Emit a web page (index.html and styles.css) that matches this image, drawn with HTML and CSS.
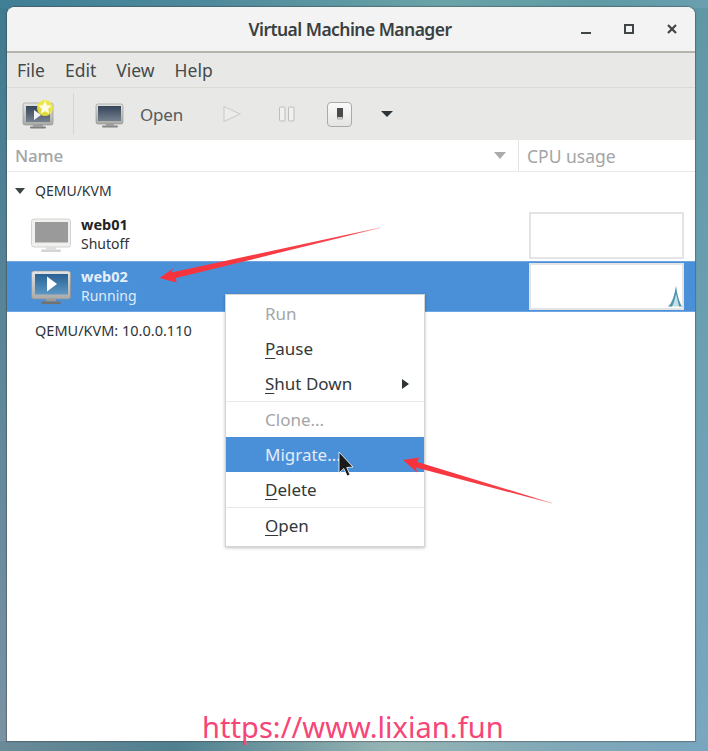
FILE: index.html
```html
<!DOCTYPE html>
<html lang="en">
<head>
<meta charset="utf-8">
<title>Virtual Machine Manager</title>
<link rel="stylesheet" href="styles.css">
</head>
<body>
<svg class="defs" width="0" height="0" aria-hidden="true">
  <defs>
    <linearGradient id="bezel" x1="0" y1="0" x2="0" y2="1"><stop offset="0" stop-color="#e4e4e2"/><stop offset="1" stop-color="#a9a9a6"/></linearGradient>
    <linearGradient id="screen" x1="0" y1="0" x2="0" y2="1"><stop offset="0" stop-color="#35445a"/><stop offset="1" stop-color="#76818f"/></linearGradient>
    <linearGradient id="blue" x1="0" y1="0" x2="0" y2="1"><stop offset="0" stop-color="#2a6293"/><stop offset="1" stop-color="#5b97c5"/></linearGradient>
    <linearGradient id="a1" gradientUnits="userSpaceOnUse" x1="160" y1="278" x2="380" y2="228"><stop offset="0" stop-color="#f6323c"/><stop offset=".85" stop-color="#f8424a"/><stop offset="1" stop-color="#ff9a9a"/></linearGradient>
    <linearGradient id="a2" gradientUnits="userSpaceOnUse" x1="403" y1="460" x2="552" y2="503"><stop offset="0" stop-color="#f6323c"/><stop offset=".85" stop-color="#f8424a"/><stop offset="1" stop-color="#ff9a9a"/></linearGradient>
  </defs>
</svg>
<div class="window">
  <header class="titlebar">
    <div class="title">Virtual Machine Manager</div>
    <div class="wm">
      <svg width="12" height="12" viewBox="0 0 12 12"><rect x="1" y="9" width="10" height="2" fill="#3f4446"/></svg>
      <svg width="12" height="12" viewBox="0 0 12 12"><rect x="2" y="2" width="8" height="8" fill="none" stroke="#3f4446" stroke-width="2"/></svg>
      <svg width="12" height="12" viewBox="0 0 12 12"><path d="M2 2l8 8M10 2l-8 8" stroke="#3f4446" stroke-width="2.2" fill="none"/></svg>
    </div>
  </header>
  <nav class="menubar"><span>File</span><span>Edit</span><span>View</span><span>Help</span></nav>
  <div class="toolbar">
    <svg class="new-icon" width="34" height="32" viewBox="0 0 34 32">
      <rect x="2" y="5" width="30" height="22" rx="2" fill="url(#bezel)" stroke="#8f8f8d" stroke-width=".6"/>
      <rect x="5" y="8" width="24" height="16" fill="url(#screen)"/>
      <path d="M13 12l7 5-7 5z" fill="#f2f2f2"/>
      <rect x="12" y="27" width="10" height="1.500" fill="#999"/><rect x="9" y="28.500" width="16" height="2" rx="1" fill="#808080"/>
      <circle cx="24" cy="10" r="8" fill="#efe93a" opacity=".9"/>
      <path d="M24 3l2 4.300 4.700.5-3.500 3.200 1 4.600-4.200-2.400-4.200 2.400 1-4.600-3.500-3.200 4.700-.5z" fill="#fdfbe2"/>
    </svg>
    <div class="tb-sep"></div>
    <svg class="open-icon" width="30" height="28" viewBox="0 0 30 28">
      <rect x="1" y="4" width="27" height="20" rx="2" fill="url(#bezel)" stroke="#8f8f8d" stroke-width=".6"/>
      <rect x="3" y="6" width="23" height="15" fill="url(#screen)"/>
      <rect x="11" y="24" width="8" height="1.500" fill="#999"/><rect x="7" y="25.500" width="16" height="2" rx="1" fill="#858585"/>
    </svg>
    <span class="tb-label">Open</span>
    <svg class="tb-play" width="20" height="20" viewBox="0 0 20 20"><path d="M2 2.500L18 10 2 17.500z" fill="#ececea" stroke="#cfd0ce" stroke-width="1.200"/></svg>
    <svg class="tb-pause" width="18" height="16" viewBox="0 0 18 16"><rect x="1.500" y="1" width="5.500" height="14" rx="1" fill="#f0f0ee" stroke="#bdbdbb"/><rect x="10.500" y="1" width="5.500" height="14" rx="1" fill="#f0f0ee" stroke="#bdbdbb"/></svg>
    <div class="tb-stop"><svg width="8" height="14" viewBox="0 0 8 14"><path d="M1 1h6v8l-1 4H2L1 9z" fill="#4a4a4a"/><rect x="2" y="10" width="4" height="3" fill="#c8c8c8"/></svg></div>
    <span class="tb-caret"></span>
  </div>
  <div class="colhead">
    <div class="col-name"><span>Name</span><i class="sort"></i></div>
    <div class="col-cpu">CPU usage</div>
  </div>
  <main class="list">
    <div class="group"><i class="expander"></i><span>QEMU/KVM</span></div>
    <div class="row">
      <svg class="vm-icon" width="42" height="40" viewBox="0 0 42 40">
        <rect x="1.500" y="4" width="39" height="28" rx="2.500" fill="#f0f0ee" stroke="#d2d2d0"/>
        <rect x="5" y="7" width="33" height="20.500" fill="#9a9a9a"/>
        <rect x="16" y="32" width="10" height="2.500" fill="#dededc"/><rect x="11" y="34.500" width="20" height="2.500" rx="1.200" fill="#d4d4d2"/>
      </svg>
      <div class="vm-text"><b>web01</b><span>Shutoff</span></div>
      <div class="graph"></div>
    </div>
    <div class="row selected">
      <svg class="vm-icon" width="42" height="40" viewBox="0 0 42 40">
        <rect x="1.500" y="4" width="39" height="28" rx="2.500" fill="url(#bezel)" stroke="#8f8f8d" stroke-width=".6"/>
        <rect x="5" y="7" width="33" height="20.500" fill="url(#blue)"/>
        <path d="M17 9.500l10 7.500-10 7.500z" fill="#fff"/>
        <rect x="16" y="32" width="10" height="2.500" fill="#9a9a98"/><rect x="11" y="34.500" width="20" height="2.500" rx="1.200" fill="#727270"/>
      </svg>
      <div class="vm-text"><b>web02</b><span>Running</span></div>
      <div class="graph">
        <svg class="spark" width="17" height="23" viewBox="0 0 17 23">
          <path d="M3 21.500C7 19 9.500 10 11 1 12 9 14 17 17 21.500z" fill="#c4dfe6"/>
          <path d="M3 21.500C7 19 9.500 10 11 1 12 9 14 17 17 21.500H14C13 17 12 12 11 9 10 13 9 18 7 21.500z" fill="#4e95ad"/>
        </svg>
      </div>
    </div>
    <div class="group connection">QEMU/KVM: 10.0.0.110</div>
  </main>

  <div class="ctx">
    <div class="mi off">Run</div>
    <div class="mi"><u>P</u>ause</div>
    <div class="mi">
      <span><u>S</u>hut Down</span>
      <i class="sub"></i>
    </div>
    <div class="msep"></div>
    <div class="mi off">Clone...</div>
    <div class="mi hot">Migrate...</div>
    <div class="mi"><u>D</u>elete</div>
    <div class="msep"></div>
    <div class="mi"><u>O</u>pen</div>
  </div>
</div>

<svg class="overlay" width="708" height="751" viewBox="0 0 708 751" aria-hidden="true">
  <path d="M159.500 278L173 268.500 171.500 272.500 380 227.500 380 228 176 278 176.500 282.500z" fill="url(#a1)"/>
  <path d="M403 460L419 457.500 417.500 462 552 503 552 503.500 416 467.500 417 472.500z" fill="url(#a2)"/>
  <path d="M339 452v21l4.800-4.500 3.400 7.500 2.800-1.200-3.200-7.300 6.200-.5z" fill="#1a1a1a" stroke="#fff" stroke-width=".8"/>
</svg>
<div class="watermark">https://www.lixian.fun</div>
</body>
</html>
```
FILE: styles.css
```css
* { box-sizing: border-box; }
html, body { margin: 0; height: 100%; }
body {
  width: 708px;
  height: 751px;
  overflow: hidden;
  padding: 7px 13px 10px 7px;
  position: relative;
  font-family: "Noto Sans", "Open Sans", sans-serif;
  background-color: #5f98a5;
  background-image:
    linear-gradient(90deg, #3f7f96 0%, #4e8a9c 30%, #6aa3a8 62%, #5f9aa5 85%, #6a9fb0 100%),
    linear-gradient(90deg, #6b8a98 0%, #4f8090 25%, #96b4b4 55%, #7fa8b8 80%, #78a5bf 100%),
    linear-gradient(180deg, #3f7a90 0%, #7b93a3 100%),
    linear-gradient(180deg, #5f98a5 0%, #79a8c0 100%);
  background-repeat: no-repeat;
  background-size: 100% 8px, 100% 10px, 8px 100%, 14px 100%;
  background-position: 0 0, 0 100%, 0 0, 100% 0;
}
.defs { position: absolute; }
.window {
  position: relative;
  width: 688px;
  height: 734px;
  display: flex;
  flex-direction: column;
  background: #fff;
  border-radius: 8px 8px 0 0;
  box-shadow: 0 0 1px 1px rgba(60, 60, 60, .45);
  overflow: hidden;
}
.titlebar {
  height: 46px;
  flex: none;
  position: relative;
  display: flex;
  align-items: center;
  justify-content: center;
  background: #f3f3f3;
  border-bottom: 2px solid #b5b3ae;
  padding: 0 2px 1px 0;
}
.title {
  font-size: 17.500px;
  font-weight: 600;
  color: #3a3f41;
  letter-spacing: -.55px;
}
.wm {
  position: absolute;
  right: 17px;
  top: 16px;
  display: flex;
  gap: 31px;
}
.menubar {
  height: 35px;
  flex: none;
  display: flex;
  align-items: center;
  gap: 20px;
  padding: 0 0 0 10px;
  background: #e8e8e6;
  border-bottom: 1px solid #d9d9d6;
  font-size: 17.500px;
  color: #454a4c;
}
.toolbar {
  height: 52px;
  flex: none;
  display: flex;
  align-items: center;
  background: #e8e8e6;
  color: #555a5c;
}
.new-icon { margin-left: 14px; }
.tb-sep { width: 1px; height: 42px; margin-left: 18px; background: #d6d6d3; }
.open-icon { margin-left: 21px; }
.tb-label { margin-left: 15px; font-size: 17px; letter-spacing: -.2px; }
.tb-play { margin-left: 39px; }
.tb-pause { margin-left: 36px; }
.tb-stop {
  width: 25px;
  height: 25px;
  margin-left: 31px;
  display: flex;
  align-items: center;
  justify-content: center;
  background: linear-gradient(#fafafa, #e4e4e2);
  border: 1px solid #aaa;
  border-radius: 4px;
}
.tb-caret {
  margin-left: 29px;
  border: 6px solid transparent;
  border-top: 6px solid #2e3436;
  border-bottom: 0;
}
.colhead {
  height: 32px;
  flex: none;
  display: flex;
  background: #fff;
  border-bottom: 1px solid #e8e8e6;
  color: #a3a5a6;
  font-size: 17px;
}
.col-name {
  width: 512px;
  display: flex;
  align-items: center;
  justify-content: space-between;
  padding: 0 12px 0 8px;
  border-right: 1px solid #e4e4e2;
  font-weight: 500;
  letter-spacing: -.2px;
}
.sort {
  border: 6px solid transparent;
  border-top: 7px solid #a9abac;
  border-bottom: 0;
}
.col-cpu { padding-left: 8px; display: flex; align-items: center; font-size: 17.500px; }
.list { flex: 1; background: #fff; color: #2e3436; font-size: 14px; }
.group {
  height: 37px;
  display: flex;
  align-items: center;
  gap: 10px;
  padding-left: 8px;
}
.connection { padding-left: 28px; height: 36px; font-size: 14.500px; }
.expander {
  border: 5px solid transparent;
  border-top: 6px solid #3e4345;
  border-bottom: 0;
}
.row {
  height: 52px;
  display: flex;
  align-items: center;
  padding-left: 23px;
  color: #2e3436;
}
.row.selected {
  background: #4a90d9;
  color: #dfeaf7;
  height: 51px;
  box-shadow: inset 0 1px 0 #6da6e2, inset 0 -1px 0 #6da6e2;
}
.vm-text { margin: -2px 0 0 9px; display: flex; flex-direction: column; line-height: 19px; flex: 1; }
.selected .vm-text { line-height: 20px; }
.vm-text b { font-weight: 700; color: #1f2325; font-size: 14.500px; }
.selected .vm-text b { color: #e6eff9; }
.graph {
  position: relative;
  width: 155px;
  height: 47px;
  margin-right: 11px;
  background: #fff;
  border: 2px solid #e4e4e4;
}
.spark { position: absolute; right: 0; bottom: 0; }
.ctx {
  position: absolute;
  left: 218px;
  top: 287px;
  width: 200px;
  height: 253px;
  padding: 1px 0 0;
  background: #fff;
  border: 1px solid #d4d4d4;
  box-shadow: 0 1px 3px rgba(0, 0, 0, .25);
  color: #33383a;
  font-size: 17px;
}
.mi {
  height: 35px;
  padding: 0 15px 0 39px;
  display: flex;
  align-items: center;
  white-space: pre;
}
.mi span { flex: 1; }
.mi.off { color: #a4a6a7; }
.mi.hot { background: #4a90d9; color: #e2ecf8; }
.mi u { text-underline-offset: 3px; }
.sub {
  border: 5px solid transparent;
  border-left: 7px solid #2e3436;
  border-right: 0;
}
.msep { height: 1px; background: #e9e9e9; }
.overlay { position: absolute; left: 0; top: 0; pointer-events: none; }
.watermark {
  position: absolute;
  left: 202px;
  top: 707px;
  font-family: "Noto Sans", sans-serif;
  font-size: 29px;
  line-height: 40px;
  letter-spacing: .05px;
  color: #f64677;
  white-space: nowrap;
}
```
